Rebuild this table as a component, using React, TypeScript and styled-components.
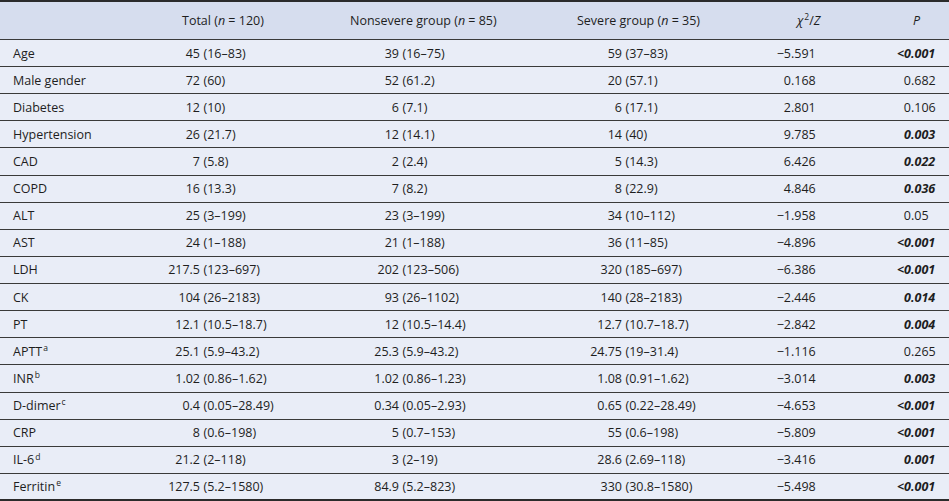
import styled, { createGlobalStyle } from "styled-components";

const GlobalStyle = createGlobalStyle`
  body {
    margin: 0;
    background: #ffffff;
    font-family: "Open Sans", "Liberation Sans", sans-serif;
    color: #1e1e1e;
  }
`;

const COLS = "160px 180px 220px 180px 120px 89px";

const Table = styled.div`
  width: 949px;
  height: 501px;
  display: grid;
  grid-template-rows: 40px repeat(17, 1fr);
  background-color: #e9edf7;
  font-size: 12.5px;
`;

const HeaderRow = styled.div`
  display: grid;
  grid-template-columns: ${COLS};
  box-sizing: border-box;
  border-top: 2px solid #2b2b2b;
  border-bottom: 1px solid #3a3a3a;
  background-color: #d6ddee;
  align-items: center;
`;

const Row = styled.div<{ last?: boolean }>`
  display: grid;
  grid-template-columns: ${COLS};
  box-sizing: border-box;
  border-bottom: ${(p) => (p.last ? "2px solid #2b2b2b" : "1px solid #3a3a3a")};
  align-items: center;
`;

const HeadCell = styled.div<{ pad: number }>`
  padding-left: ${(p) => p.pad}px;
  white-space: nowrap;
`;

const LabelCell = styled.div`
  padding-left: 13px;
  white-space: nowrap;
`;

const Aligned = styled.div`
  display: flex;
  align-items: baseline;
  white-space: nowrap;
`;

const Lead = styled.span<{ w: number }>`
  display: inline-block;
  width: ${(p) => p.w}px;
  text-align: right;
`;

const Tail = styled.span<{ gap?: number }>`
  padding-left: ${(p) => p.gap ?? 0}px;
`;

const Sig = styled.span<{ strong?: boolean }>`
  font-weight: ${(p) => (p.strong ? 700 : 400)};
  font-style: ${(p) => (p.strong ? "italic" : "normal")};
`;

const Sup = styled.sup`
  font-size: 0.68em;
  line-height: 0;
  vertical-align: 0.55em;
  margin-left: 1px;
`;

const I = styled.i`
  font-style: italic;
`;

type Rec = {
  label: string;
  note?: string;
  total: string;
  non: string;
  sev: string;
  chi: string;
  p: string;
  sig: boolean;
};

const rows: Rec[] = [
  { label: "Age", total: "45 (16–83)", non: "39 (16–75)", sev: "59 (37–83)", chi: "−5.591", p: "<0.001", sig: true },
  { label: "Male gender", total: "72 (60)", non: "52 (61.2)", sev: "20 (57.1)", chi: "0.168", p: "0.682", sig: false },
  { label: "Diabetes", total: "12 (10)", non: "6 (7.1)", sev: "6 (17.1)", chi: "2.801", p: "0.106", sig: false },
  { label: "Hypertension", total: "26 (21.7)", non: "12 (14.1)", sev: "14 (40)", chi: "9.785", p: "0.003", sig: true },
  { label: "CAD", total: "7 (5.8)", non: "2 (2.4)", sev: "5 (14.3)", chi: "6.426", p: "0.022", sig: true },
  { label: "COPD", total: "16 (13.3)", non: "7 (8.2)", sev: "8 (22.9)", chi: "4.846", p: "0.036", sig: true },
  { label: "ALT", total: "25 (3–199)", non: "23 (3–199)", sev: "34 (10–112)", chi: "−1.958", p: "0.05", sig: false },
  { label: "AST", total: "24 (1–188)", non: "21 (1–188)", sev: "36 (11–85)", chi: "−4.896", p: "<0.001", sig: true },
  { label: "LDH", total: "217.5 (123–697)", non: "202 (123–506)", sev: "320 (185–697)", chi: "−6.386", p: "<0.001", sig: true },
  { label: "CK", total: "104 (26–2183)", non: "93 (26–1102)", sev: "140 (28–2183)", chi: "−2.446", p: "0.014", sig: true },
  { label: "PT", total: "12.1 (10.5–18.7)", non: "12 (10.5–14.4)", sev: "12.7 (10.7–18.7)", chi: "−2.842", p: "0.004", sig: true },
  { label: "APTT", note: "a", total: "25.1 (5.9–43.2)", non: "25.3 (5.9–43.2)", sev: "24.75 (19–31.4)", chi: "−1.116", p: "0.265", sig: false },
  { label: "INR", note: "b", total: "1.02 (0.86–1.62)", non: "1.02 (0.86–1.23)", sev: "1.08 (0.91–1.62)", chi: "−3.014", p: "0.003", sig: true },
  { label: "D-dimer", note: "c", total: "0.4 (0.05–28.49)", non: "0.34 (0.05–2.93)", sev: "0.65 (0.22–28.49)", chi: "−4.653", p: "<0.001", sig: true },
  { label: "CRP", total: "8 (0.6–198)", non: "5 (0.7–153)", sev: "55 (0.6–198)", chi: "−5.809", p: "<0.001", sig: true },
  { label: "IL-6", note: "d", total: "21.2 (2–118)", non: "3 (2–19)", sev: "28.6 (2.69–118)", chi: "−3.416", p: "0.001", sig: true },
  { label: "Ferritin", note: "e", total: "127.5 (5.2–1580)", non: "84.9 (5.2–823)", sev: "330 (30.8–1580)", chi: "−5.498", p: "<0.001", sig: true },
];

// split "45 (16–83)" at the paren, "−5.591" at the decimal point
const byParen = (s: string): [string, string] => {
  const i = s.indexOf(" (");
  return [s.slice(0, i), s.slice(i + 1)];
};
const byDot = (s: string): [string, string] => {
  const i = s.indexOf(".");
  return [s.slice(0, i), s.slice(i)];
};

function ParenCell({ value, lead }: { value: string; lead: number }) {
  const [a, b] = byParen(value);
  return (
    <Aligned>
      <Lead w={lead}>{a}</Lead>
      <Tail gap={3.5}>{b}</Tail>
    </Aligned>
  );
}

export default function App() {
  return (
    <>
      <GlobalStyle />
      <Table>
        <HeaderRow>
          <div />
          <HeadCell pad={22}>
            Total (<I>n</I> = 120)
          </HeadCell>
          <HeadCell pad={10}>
            Nonsevere group (<I>n</I> = 85)
          </HeadCell>
          <HeadCell pad={17}>
            Severe group (<I>n</I> = 35)
          </HeadCell>
          <HeadCell pad={57}>
            <I>χ</I>
            <Sup>2</Sup>/<I>Z</I>
          </HeadCell>
          <HeadCell pad={53}>
            <I>P</I>
          </HeadCell>
        </HeaderRow>
        {rows.map((r, idx) => {
          const [c1, c2] = byDot(r.chi);
          const [p1, p2] = byDot(r.p);
          return (
            <Row key={r.label} last={idx === rows.length - 1}>
              <LabelCell>
                {r.label}
                {r.note && <Sup>{r.note}</Sup>}
              </LabelCell>
              <ParenCell value={r.total} lead={40} />
              <ParenCell value={r.non} lead={59} />
              <ParenCell value={r.sev} lead={62} />
              <Aligned>
                <Lead w={51}>{c1}</Lead>
                <Tail>{c2}</Tail>
              </Aligned>
              <Aligned>
                <Sig strong={r.sig}>
                  <Lead w={51}>{p1}</Lead>
                  <Tail>{p2}</Tail>
                </Sig>
              </Aligned>
            </Row>
          );
        })}
      </Table>
    </>
  );
}
